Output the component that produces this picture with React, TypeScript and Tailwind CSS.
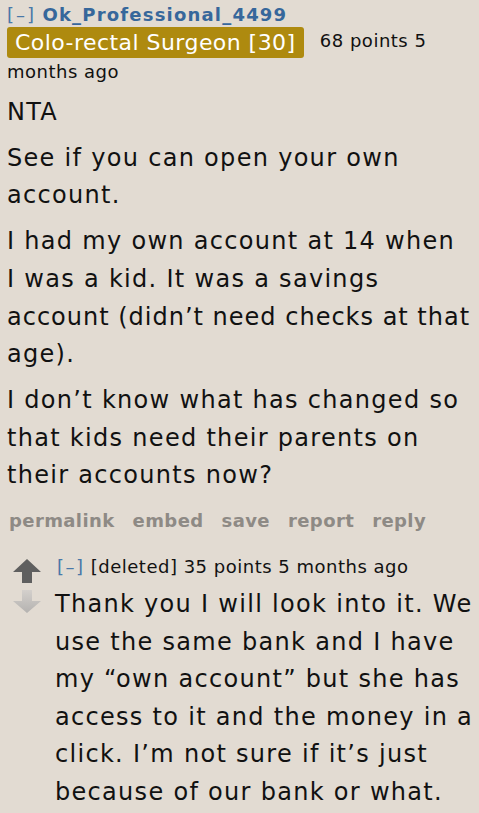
const Lines = ({ lines }: { lines: string[] }) => (
  <>
    {lines.map((l, i) => (
      <span key={i} className={`block whitespace-nowrap ${l.length > 34 ? "tracking-[1px]" : ""}`}>
        {l}
      </span>
    ))}
  </>
);

export default function App() {
  const font = { fontFamily: '"DejaVu Sans", Verdana, sans-serif' };
  return (
    <div className="min-h-[813px] w-[479px] bg-[#e2dbd2] text-[#111] overflow-hidden" style={font}>
      <div className="pl-[7px] pt-[3px]">
        <div className="text-[18px] leading-[24px] tracking-[0.6px]">
          <span className="tracking-[2px] text-[#4a78a8]">[–]</span>{" "}
          <span className="font-bold tracking-[1.2px] text-[#36679b]">Ok_Professional_4499</span>
        </div>
        <div className="text-[18px] leading-[28px] tracking-[0.5px]">
          <span className="inline-block rounded-[3px] bg-[#ae8a0f] px-[8px] text-[22px] leading-[31px] tracking-[0.45px] text-white">
            Colo-rectal Surgeon [30]
          </span>{" "}
          <span className="ml-[10px] align-top">68 points 5 months ago</span>
        </div>
        <div className="mt-[8px] text-[24px] leading-[37.7px] tracking-[1.3px]">
          <p>NTA</p>
          <p className="mt-[8px]">
            <Lines lines={["See if you can open your own", "account."]} />
          </p>
          <p className="mt-[8px]">
            <Lines
              lines={[
                "I had my own account at 14 when",
                "I was a kid. It was a savings",
                "account (didn’t need checks at that",
                "age).",
              ]}
            />
          </p>
          <p className="mt-[8px]">
            <Lines
              lines={[
                "I don’t know what has changed so",
                "that kids need their parents on",
                "their accounts now?",
              ]}
            />
          </p>
        </div>
        <div className="mt-[14px] flex gap-[18px] pl-[2px] text-[18px] font-bold leading-[24px] tracking-[0.4px] text-[#8e8a85]">
          <span>permalink</span>
          <span>embed</span>
          <span>save</span>
          <span>report</span>
          <span>reply</span>
        </div>
      </div>
      <div className="mt-[22px] flex">
        <div className="flex w-[55px] flex-col items-center pt-[3px] pr-[2px]">
          <svg width="30" height="26" viewBox="0 0 30 26">
            <path d="M15 1 L29 14 L20 14 L20 25 L10 25 L10 14 L1 14 Z" fill="#5f5f5f" />
          </svg>
          <svg width="30" height="24" viewBox="0 0 30 24" className="mt-[6px]">
            <defs>
              <linearGradient id="dg" x1="0" y1="0" x2="0" y2="1">
                <stop offset="0" stopColor="#d4d0cc" />
                <stop offset="1" stopColor="#b4b2b0" />
              </linearGradient>
            </defs>
            <path d="M10 0 L20 0 L20 11 L29 11 L15 23 L1 11 L10 11 Z" fill="url(#dg)" />
          </svg>
        </div>
        <div className="flex-1">
          <div className="pl-[2px] text-[18px] leading-[24px] tracking-[0.5px]">
            <span className="tracking-[1.5px] text-[#4a78a8]">[–]</span> [deleted] 35 points 5 months ago
          </div>
          <p className="mt-[7px] text-[24px] leading-[37.5px] tracking-[1.3px]">
            <Lines
              lines={[
                "Thank you I will look into it. We",
                "use the same bank and I have",
                "my “own account” but she has",
                "access to it and the money in a",
                "click. I’m not sure if it’s just",
                "because of our bank or what.",
              ]}
            />
          </p>
        </div>
      </div>
    </div>
  );
}
